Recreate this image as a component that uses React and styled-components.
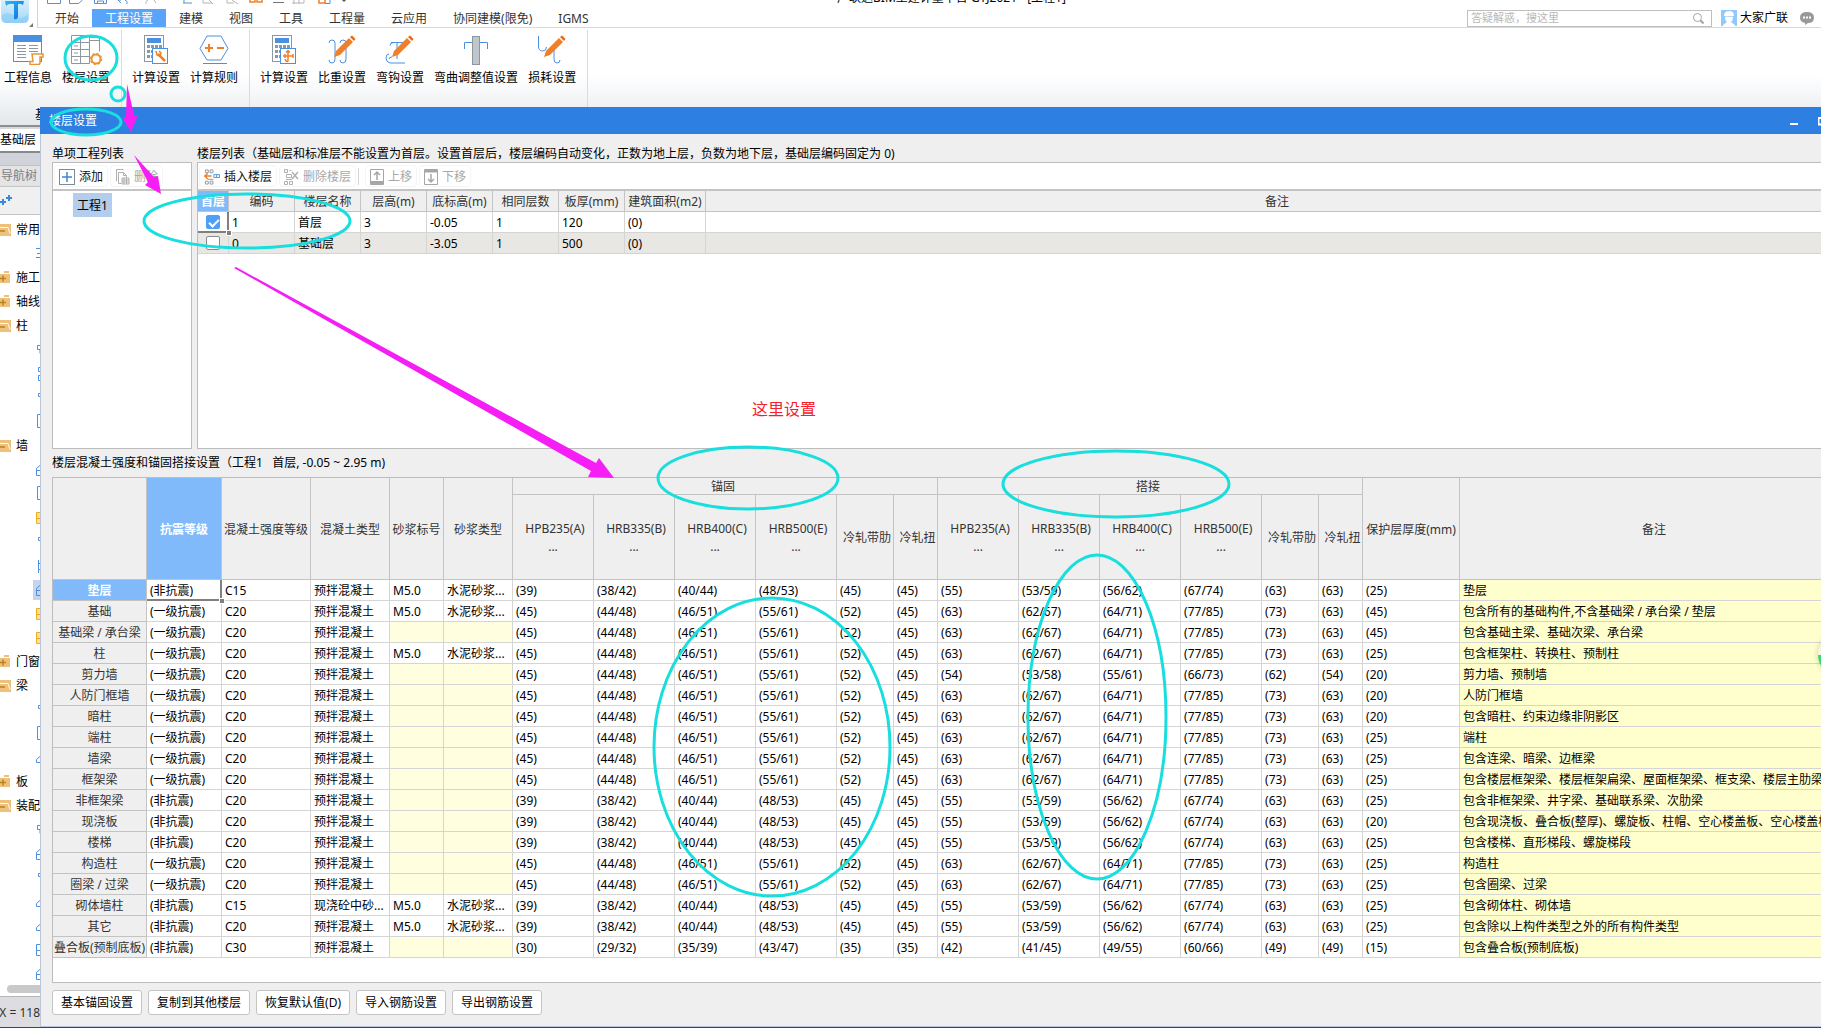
import { useState } from "react";
import styled, { createGlobalStyle } from "styled-components";

const GlobalStyle = createGlobalStyle`
  * {
    box-sizing: border-box;
  }
  body {
    margin: 0;
    overflow: hidden;
    background: #fff;
    font-family: "Noto Sans", "Noto Sans CJK SC", sans-serif;
    font-size: 12px;
    line-height: 16px;
    color: #000;
  }
  button, input {
    font: inherit;
    color: inherit;
    margin: 0;
  }
  svg {
    display: block;
    flex: none;
  }
`;

const Page = styled.div`
  position: relative;
  display: flex;
  flex-direction: column;
  height: 100vh;
  overflow: hidden;
  border-bottom: 1px solid #3b4450;
`;

/* ---------- header ---------- */

const Header = styled.header`
  display: flex;
  height: 28px;
  flex: none;
`;

const LogoBox = styled.div`
  width: 38px;
  border-right: 1px solid #d5d5d5;
`;

const HeaderMain = styled.div`
  flex: 1;
  display: flex;
  flex-direction: column;
  border-bottom: 1px solid #d9d9d9;
`;

const TitleRow = styled.div`
  display: flex;
  align-items: flex-end;
  height: 9px;
  padding: 0 264px 3px 8px;
  overflow: hidden;
`;

const QuickBar = styled.div`
  height: 6px;
`;

const AppTitle = styled.div`
  flex: 1;
  text-align: center;
`;

const TabRow = styled.div`
  display: flex;
  align-items: center;
  height: 18px;
  padding: 0 7px 0 4px;
`;

const Tab = styled.button`
  height: 18px;
  padding: 2px 13px 0;
  border: 0;
  white-space: nowrap;
  background: ${(p) => (p.$active ? "#58a4f8" : "transparent")};
  color: ${(p) => (p.$active ? "#fff" : "#333")};
`;

const SearchBox = styled.label`
  display: flex;
  align-items: center;
  width: 245px;
  height: 17px;
  margin-left: auto;
  padding: 0 7px 0 3px;
  border: 1px solid #c0c0c0;
`;

const SearchInput = styled.input`
  flex: 1;
  min-width: 0;
  height: 15px;
  padding: 0;
  border: 0;
  outline: 0;
  background: transparent;
  font-size: 11px;
  &::placeholder {
    color: #b8b8b8;
  }
`;

const User = styled.div`
  display: flex;
  align-items: center;
  gap: 3px;
  margin: 0 12px 0 9px;
`;

/* ---------- ribbon ---------- */

const Ribbon = styled.div`
  display: flex;
  flex: none;
  height: 79px;
  padding-top: 2px;
  background: linear-gradient(#fff 60%, #eef1f3);
`;

const RibbonGroup = styled.div`
  display: flex;
  gap: 10px;
  padding: 5px 11px 0 ${(p) => (p.$first ? "4px" : "10px")};
  border-right: 1px solid #d9dbdc;
`;

const RibbonButton = styled.button`
  display: flex;
  flex-direction: column;
  align-items: center;
  gap: 5px;
  height: 51px;
  padding: 0;
  border: 0;
  background: none;
  white-space: nowrap;
`;

/* ---------- left strip ---------- */

const Workspace = styled.div`
  display: flex;
  flex: 1;
  min-height: 0;
`;

const Sidebar = styled.aside`
  display: flex;
  flex-direction: column;
  width: 40px;
  flex: none;
  overflow: hidden;
  white-space: nowrap;
`;

const RibbonFoot = styled.div`
  height: 18px;
  padding-left: 35px;
  background: linear-gradient(#eef1f3, #e3e7e9);
`;

const FloorPicker = styled.div`
  height: 28px;
  padding-top: 5px;
  border-top: 2px solid #8e8e8e;
  border-bottom: 2px solid #858a8e;
  background: linear-gradient(#d9d9d9 2px, #fff 2px);
`;

const NavGap = styled.div`
  height: 12px;
  background: #d0d3d9;
`;

const NavTitle = styled.div`
  height: 22px;
  padding: 2px 0 0 1px;
  border-top: 1px solid #bfc2c6;
  border-bottom: 1px solid #c4c4c4;
  background: #e4e4e6;
  color: #7d7d7d;
`;

const NavTools = styled.div`
  height: 28px;
  padding-top: 7px;
  border-bottom: 1px solid #c4c4c4;
  background: #f0f0f0;
`;

const Tree = styled.div`
  flex: 1;
  min-height: 0;
  padding-top: 3px;
  overflow: hidden;
`;

const TreeRow = styled.div`
  display: flex;
  align-items: center;
  gap: 4px;
  height: 24px;
`;

const TreeLeaf = styled.div`
  width: 7px;
  height: 20px;
  margin-left: 33px;
  padding: 2px 0 0 3px;
  background: ${(p) => (p.$selected ? "#c3d5ee" : "transparent")};
`;

const ScrollThumb = styled.div`
  height: 8px;
  flex: none;
  margin: 0 -8px 3px 7px;
  border-radius: 4px;
  background: #c9c9c9;
`;

const StatusBar = styled.div`
  display: flex;
  justify-content: flex-end;
  align-items: center;
  height: 31px;
  flex: none;
  padding-top: 2px;
  border-top: 1px solid #b5b5ba;
  background: #dddde1;
  color: #333;
`;

/* ---------- dialog ---------- */

const Dialog = styled.section`
  display: flex;
  flex-direction: column;
  flex: 1;
  min-width: 0;
  margin-right: -41px;
  background: #efefef;
`;

const DialogTitle = styled.div`
  display: flex;
  align-items: center;
  height: 27px;
  flex: none;
  padding: 0 33px 0 9px;
  background: #2d7fe1;
  color: #fff;
`;

const WindowButtons = styled.div`
  display: flex;
  gap: 20px;
  margin-left: auto;
`;

const WindowButton = styled.button`
  padding: 0;
  border: 0;
  background: none;
`;

const DialogBody = styled.div`
  display: flex;
  flex-direction: column;
  flex: 1;
  min-height: 0;
  padding: 10px 12px 11px 11px;
  border-left: 1px solid #bcc6da;
  border-bottom: 1px solid #bcc6da;
`;

const Lists = styled.div`
  display: flex;
  gap: 5px;
`;

const ListColumn = styled.div`
  min-width: 0;
  ${(p) => (p.$wide ? "flex: 1;" : "flex: 0 0 140px;")}
`;

const Caption = styled.div`
  display: flex;
  align-items: center;
  height: ${(p) => (p.$tall ? "28px" : "18px")};
  padding-top: ${(p) => (p.$tall ? "0" : "2px")};
  flex: none;
  white-space: pre;
`;

const Panel = styled.div`
  border: 1px solid #bdbdbd;
  background: #fff;
  overflow: hidden;
  ${(p) => (p.$fill ? "flex: 1; min-height: 0;" : "height: 287px;")}
`;

const Toolbar = styled.div`
  display: flex;
  align-items: center;
  gap: 2px;
  height: 28px;
  padding: 0 1px;
  border-bottom: 2px solid #c4c4c4;
`;

const ToolButton = styled.button`
  display: flex;
  align-items: center;
  gap: 4px;
  height: 22px;
  padding: 1px 4px 0;
  border: 1px solid #f5f5f5;
  border-radius: 4px;
  background: #fff;
  white-space: nowrap;
  color: ${(p) => (p.disabled ? "#a8a8a8" : "#111")};
`;

const ToolDivider = styled.div`
  width: 1px;
  height: 17px;
  margin: 0 4px 0 0;
  background: #d8d8d8;
`;

const ProjectItem = styled.button`
  display: block;
  height: 24px;
  margin: 2px 0 0 20px;
  padding: 2px 4px 0;
  border: 0;
  background: #b3cdec;
`;

const Table = styled.table`
  width: 100%;
  table-layout: fixed;
  border-collapse: separate;
  border-spacing: 0;
`;

const HeadCell = styled.th`
  height: ${(p) => p.$height || 21}px;
  padding: 2px ${(p) => (p.$group ? "4px" : "0")} 0 ${(p) => (p.$sub ? "4px" : "0")};
  border-right: 1px solid #c3c3c3;
  border-bottom: 1px solid #c3c3c3;
  background: ${(p) => (p.$selected ? "#80bafb" : "#efefef")};
  color: ${(p) => (p.$selected ? "#fff" : "#333")};
  font-weight: ${(p) => (p.$selected ? 700 : 400)};
  line-height: ${(p) => (p.$group ? "14px" : "16px")};
  text-align: center;
  white-space: nowrap;
`;

const Dots = styled.div`
  margin: 2px 0 0 -4px;
`;

const cellColors = {
  plain: "#fff",
  shaded: "#e8e7e3",
  empty: "#ffffe0",
  note: "#ffffcd",
};

const Cell = styled.td`
  position: relative;
  height: 21px;
  padding: 2px 0 0 3px;
  border-right: 1px solid #d5d5d5;
  border-bottom: 1px solid #d5d5d5;
  background: ${(p) => cellColors[p.$tone || "plain"]};
  white-space: nowrap;
  ${(p) => p.$current && "box-shadow: inset -1px -1px 0 #808080; border-color: #808080;"}
`;

const CheckCell = styled(Cell)`
  padding: 0 0 0 8px;
`;

const FillHandle = styled.span`
  position: absolute;
  z-index: 1;
  right: -4px;
  bottom: -4px;
  width: 6px;
  height: 6px;
  border: 1px solid #fff;
  background: #808080;
`;

const CheckBox = styled.input`
  appearance: none;
  display: block;
  width: 14px;
  height: 14px;
  border: 1px solid #8a8a8a;
  border-radius: 2px;
  background: #fff;
  &:checked {
    border-color: #4f9ff6;
    background: #4f9ff6;
  }
  &:checked::after {
    content: "";
    display: block;
    width: 8px;
    height: 4px;
    margin: 3px 0 0 2px;
    border-left: 2px solid #fff;
    border-bottom: 2px solid #fff;
    transform: rotate(-45deg);
  }
`;

const Footer = styled.div`
  display: flex;
  gap: 6px;
  flex: none;
  padding-top: 7px;
`;

const FooterButton = styled.button`
  height: 25px;
  padding: 0 8px;
  border: 1px solid #c4c4c4;
  border-radius: 3px;
  background: #fff;
  white-space: nowrap;
`;

/* ---------- marks drawn over the page ---------- */

const Marks = styled.svg`
  position: absolute;
  inset: 0;
  z-index: 2;
  width: 100%;
  height: 100%;
  pointer-events: none;
`;

const MarkText = styled.div`
  position: absolute;
  z-index: 2;
  left: 752px;
  top: 398px;
  font-size: 16px;
  line-height: 22px;
  color: #f5222d;
`;

const FloatBall = styled.div`
  position: absolute;
  z-index: 2;
  right: -37px;
  top: 635px;
  width: 40px;
  height: 40px;
  border-radius: 50%;
  background: linear-gradient(#f3f7e6 50%, #35d86a 50%);
  box-shadow: 0 0 6px rgba(0, 0, 0, 0.2);
`;

/* ---------- icons ---------- */

const BLUE = "#4a90e2";
const GRAY = "#8d979e";
const ORANGE = "#f07f2a";

const Logo = () => (
  <svg width="37" height="28" viewBox="0 0 37 28">
    <defs>
      <linearGradient id="sky" x1="0" y1="0" x2="0" y2="1">
        <stop offset="0" stopColor="#e6f5fe" />
        <stop offset="1" stopColor="#a3d8f8" />
      </linearGradient>
      <linearGradient id="tee" x1="0" y1="0" x2="1" y2="1">
        <stop offset="0" stopColor="#2cb4f5" />
        <stop offset="1" stopColor="#0d6fd8" />
      </linearGradient>
    </defs>
    <rect x="1" y="-6" width="28" height="29" rx="5" fill="url(#sky)" />
    <path d="M2 15q7-4 13 1t13-2v5q0 4-4 4H6q-4 0-4-4z" fill="#7fc6f5" opacity=".5" />
    <path d="M5 1h19l-1 4q-3-2-5-1v13q-1 3-4 2V4Q8 3 6 6z" fill="url(#tee)" />
    <path d="M33 23v4h-4z" fill="#777" />
  </svg>
);

// only the lower edge of the quick access icons is inside the window
const QuickIcons = () => (
  <svg width="300" height="6" viewBox="0 0 300 6" fill="none">
    <g stroke="#5b8fd0">
      <path d="M1.500 0v3.500h13V0M23.500 0v3.500h9l4-3.500M48.500 0v3.500h12V0M51.500 3v-2h6v2" />
      <path d="M75 0l-3 0 3 3M79 0q3 1 2 4M137 3h9M138 0v3" />
    </g>
    <g stroke="#b5b5b5">
      <path d="M108 0l2 3M102 0q-3 1-2 4M157 0v3h9M163 0l4 4M181 0v3h7M186 0l6 4M248 0v4M253 0v4M258 0v3h-12" />
    </g>
    <g stroke={ORANGE} strokeWidth="1.500">
      <path d="M204 0v2h5V0M211 0v2h5V0M273 0v3h6V0" />
    </g>
    <path d="M227 2.500h11" stroke="#777" />
    <path d="M279 3.500h5V0" stroke={BLUE} />
    <path d="M296 0h4l-2 2z" fill="#555" />
  </svg>
);

const Calc = ({ children }) => (
  <svg width="32" height="30" viewBox="0 0 32 30">
    <rect x="4.500" y=".5" width="19" height="26" fill="#fff" stroke={GRAY} />
    <rect x="7" y="3" width="14" height="5" fill={BLUE} />
    <g fill={GRAY}>
      {[10, 15, 20].map((y) =>
        [7, 11, 15, 19].map((x) => <rect key={x + "-" + y} x={x} y={y} width="3" height="3" />)
      )}
    </g>
    <rect x="12.500" y="13.500" width="15" height="15" fill="#fff" stroke={BLUE} />
    {children}
  </svg>
);

const Pencil = () => (
  <g>
    <path d="M8 22l2-6 13-13 4 4-13 13z" fill={ORANGE} />
    <path d="M24 2l2-1.500 3.500 3.500-1.500 2z" fill="#e56a17" />
  </g>
);

const ribbonIcons = {
  info: (
    <svg width="32" height="30" viewBox="0 0 32 30">
      <rect x="1.500" y=".5" width="28" height="26" fill="#fff" stroke={BLUE} />
      <rect x="1" y="0" width="29" height="7" fill={BLUE} />
      <path d="M5 10.500h9M17 10.500h9M5 13.500h9M17 13.500h9M5 16.500h9M17 16.500h9M5 19.500h9M5 22.500h9" stroke={GRAY} />
      <path d="M20 19h11v3h-3v6q0 1.500-2 1.500h-8v-3h3z" fill="#fff" stroke="#e8963a" strokeWidth="1.500" />
    </svg>
  ),
  floor: (
    <svg width="32" height="30" viewBox="0 0 32 30" fill="none" stroke={GRAY}>
      <path d="M1.500.5h18v28h-18zM1.500 7.500h18M1.500 14.500h18M1.500 21.500h18M10.500.5v28M19.500 2.500h10v14M19.500 5.500h10" />
      <path d="M4 11h4M4 18h4M4 25h4" />
      <circle cx="26" cy="24" r="4.500" fill="#fff" stroke="#e8963a" strokeWidth="2" />
      <circle cx="26" cy="24" r="5.500" stroke="#e8963a" strokeWidth="1.500" strokeDasharray="2 2.300" />
    </svg>
  ),
  calcWrench: (
    <Calc>
      <path d="M18 19l7 7" stroke={ORANGE} strokeWidth="2.500" />
      <path d="M16 16l1 4 3 1 1-3-2-2" fill="none" stroke={ORANGE} strokeWidth="1.500" />
    </Calc>
  ),
  calcRule: (
    <svg width="32" height="30" viewBox="0 0 32 30" fill="none">
      <path d="M9 1h14l7 12.500L23 25H9L2 13.500z" stroke={BLUE} />
      <path d="M7 13h8M11 9v8M19 13h7" stroke={ORANGE} strokeWidth="2" />
      <path d="M5 28.500h24" stroke={BLUE} />
    </svg>
  ),
  calcArrows: (
    <Calc>
      <path d="M20 15.500v11M15 21h10M18 17.500l2-2 2 2M17 24q1 3 3 2.500M25 19v4M17 19v4" fill="none" stroke={ORANGE} strokeWidth="1.500" />
    </Calc>
  ),
  weight: (
    <svg width="32" height="30" viewBox="0 0 32 30" fill="none">
      <path d="M3 8q0-3 3-3t3 3v16q0 4-3 4t-3-3M14 8q0-3 3-3t3 3v16q0 4-3 4t-3-3" stroke={BLUE} />
      <Pencil />
    </svg>
  ),
  hook: (
    <svg width="32" height="30" viewBox="0 0 32 30" fill="none">
      <path d="M7 7.500h13M10 7.500q-4 0-4 3M5 19q-3 0-3 4t4 5h15M13 8v16M8 22q-3 0-3 2" stroke={BLUE} />
      <Pencil />
    </svg>
  ),
  bend: (
    <svg width="32" height="30" viewBox="0 0 32 30" fill="none">
      <path d="M4.500 14V7.500h23V14" stroke={BLUE} />
      <rect x="12.500" y="1.500" width="7" height="28" fill="#bfc6cc" stroke={GRAY} />
    </svg>
  ),
  loss: (
    <svg width="32" height="30" viewBox="0 0 32 30" fill="none">
      <path d="M2.500 1v10q0 5 4 5t4-4M18 10v14q0 4 3 4t3-3" stroke={BLUE} />
      <Pencil />
    </svg>
  ),
};

const FolderIcon = ({ open }) => (
  <svg width="12" height="14" viewBox="0 0 12 14">
    <path d={open ? "M0 1h11v12H0z" : "M0 3h10v9H0zM4 0h5v2H4z"} fill="#eec07a" />
    {open && <path d="M0 4.500h8l2 6" stroke="#fff" fill="none" />}
    <path d={open ? "M0 8h5" : "M0 7.500h6M3 4.500v6"} stroke="#b98227" fill="none" strokeWidth="1.500" />
  </svg>
);

const leafPaths = {
  lines: "M0 2.500h5M1 7.500h4M0 11.500h5",
  hook: "M5 3.500H1.500v4H5M4 7.500v4",
  blocks: "M5 1.500H2.500v4H5M5 9.500H2.500v5H5",
  dash: "M5 3.500H2.500v3H5",
  frame: "M5 .5H1.500v13H5",
  wall: "M5 2.500L.5 6.500v7H5M1 8.500h4",
  grid: "M5 2.500H.5v11H5M1 8.500h4",
  pole: "M2.500 2v13M3 5.500h2M3 11.500h2",
  slab: "M5 5.500L.5 9.500v3H5",
};

const TreeIcon = ({ kind, color }) => (
  <svg width="5" height="16" viewBox="0 0 5 16">
    <path d={leafPaths[kind]} stroke={color || BLUE} fill={color ? "#ffe28a" : "none"} />
  </svg>
);

const toolIcons = {
  add: (
    <svg width="16" height="16" viewBox="0 0 16 16" fill="none">
      <rect x=".5" y=".5" width="15" height="15" stroke="#7d8b94" />
      <path d="M3 8h10M8 3v10" stroke="#3c86dc" strokeWidth="1.500" />
    </svg>
  ),
  remove: (
    <svg width="15" height="16" viewBox="1 0 15 16" fill="none" stroke="#b0b0b0">
      <path d="M2.500 12V.5h7M4.500 14.500v-11h5l3 3v2M4.500 14.500h3M9.500 3.500v3h3" />
      <path d="M8 9h7v6H8zM8 11h7M8 13h7M10 9v6M12.500 9v6" />
    </svg>
  ),
  insert: (
    <svg width="16" height="16" viewBox="0 0 17 16" fill="none" stroke={GRAY}>
      <path d="M1.500.5h3v3h-3zM6.500.5h3v3h-3zM1.500 12.500h3v3h-3zM6.500 12.500h3v3h-3zM4 10.500h6" />
      <path d="M10.500 5.500h6v3h-6zM13.500 5.500v3" stroke={BLUE} />
      <path d="M0 7h8M4 4L1 7l3 3" stroke={ORANGE} strokeWidth="1.500" />
    </svg>
  ),
  drop: (
    <svg width="15" height="16" viewBox="1 0 15 16" fill="none" stroke="#b0b0b0">
      <path d="M1.500.5h3v3h-3zM6.500 1.500h2M3.500 5.500h5v3h-5zM1.500 12.500h3v3h-3zM6.500 12.500h3v3h-3zM3 10.500h6" />
      <path d="M9 3l6 7M15 3l-6 7" strokeWidth="1.500" />
    </svg>
  ),
  up: (
    <svg width="14" height="16" viewBox="0 0 14 16" fill="none" stroke="#a6a6a6">
      <path d="M.5.500h13v15H.5z" />
      <path d="M1 13.500h12" strokeWidth="3" />
      <path d="M7 11V3M4 6l3-3 3 3" strokeWidth="1.500" />
    </svg>
  ),
  down: (
    <svg width="14" height="16" viewBox="0 0 14 16" fill="none" stroke="#a6a6a6">
      <path d="M.5.500h13v15H.5z" />
      <path d="M1 2h12" strokeWidth="3" />
      <path d="M7 5v8M4 10l3 3 3-3" strokeWidth="1.500" />
    </svg>
  ),
};

/* ---------- data ---------- */

const tabs = ["开始", "工程设置", "建模", "视图", "工具", "工程量", "云应用", "协同建模(限免)", "IGMS"];

const ribbonGroups = [
  [["info", "工程信息"], ["floor", "楼层设置"]],
  [["calcWrench", "计算设置"], ["calcRule", "计算规则"]],
  [
    ["calcArrows", "计算设置"],
    ["weight", "比重设置"],
    ["hook", "弯钩设置"],
    ["bend", "弯曲调整值设置"],
    ["loss", "损耗设置"],
  ],
];

const YELLOW = "#f2a91c";

const tree = [
  { label: "常用", open: true },
  { kind: "lines" },
  { label: "施工" },
  { label: "轴线" },
  { label: "柱", open: true },
  { kind: "hook" },
  { kind: "blocks" },
  { kind: "dash" },
  { kind: "frame" },
  { label: "墙", open: true },
  { kind: "wall" },
  { kind: "frame" },
  { kind: "grid", color: YELLOW },
  { kind: "dash" },
  { kind: "pole" },
  { kind: "wall", selected: true },
  { kind: "grid", color: YELLOW },
  { kind: "grid", color: YELLOW },
  { label: "门窗" },
  { label: "梁", open: true },
  { kind: "dash" },
  { kind: "frame" },
  { kind: "slab" },
  { label: "板" },
  { label: "装配", open: true },
  { kind: "hook" },
  { kind: "wall" },
  { kind: "dash" },
  { kind: "slab" },
  { kind: "slab" },
  { kind: "grid" },
  { kind: "wall" },
];

const floorHeads = ["首层", "编码", "楼层名称", "层高(m)", "底标高(m)", "相同层数", "板厚(mm)", "建筑面积(m2)", "备注"];
const floorWidths = [31, 66, 66, 66, 66, 66, 66, 81];
const floors = [
  ["1", "首层", "3", "-0.05", "1", "120", "(0)", ""],
  ["0", "基础层", "3", "-3.05", "1", "500", "(0)", ""],
];

const bars = ["HPB235(A)", "HRB335(B)", "HRB400(C)", "HRB500(E)", "冷轧带肋", "冷轧扭"];
const barWidths = [81, 81, 81, 81, 57, 44];
const gradeWidths = [94, 75, 89, 79, 54, 69, ...barWidths, ...barWidths, 97];

const plainBars = ["39", "38/42", "40/44", "48/53", "45", "45", "55", "53/59", "56/62", "67/74", "63", "63"];
const seismicAnchor = ["45", "44/48", "46/51", "55/61", "52", "45"];
const seismicBars = [...seismicAnchor, "63", "62/67", "64/71", "77/85", "73", "63"];
const shearBars = [...seismicAnchor, "54", "53/58", "55/61", "66/73", "62", "54"];
const slabBars = ["30", "29/32", "35/39", "43/47", "35", "35", "42", "41/45", "49/55", "60/66", "49", "49"];

const NONE = "(非抗震)";
const FIRST = "(一级抗震)";
const READY = "预拌混凝土";

// name, seismic grade, concrete grade, concrete type, has mortar, bars, cover, note
const grades = [
  ["垫层", NONE, "C15", READY, true, plainBars, 25, "垫层"],
  ["基础", FIRST, "C20", READY, true, seismicBars, 45, "包含所有的基础构件,不含基础梁 / 承台梁 / 垫层"],
  ["基础梁 / 承台梁", FIRST, "C20", READY, false, seismicBars, 45, "包含基础主梁、基础次梁、承台梁"],
  ["柱", FIRST, "C20", READY, true, seismicBars, 25, "包含框架柱、转换柱、预制柱"],
  ["剪力墙", FIRST, "C20", READY, false, shearBars, 20, "剪力墙、预制墙"],
  ["人防门框墙", FIRST, "C20", READY, false, seismicBars, 20, "人防门框墙"],
  ["暗柱", FIRST, "C20", READY, false, seismicBars, 20, "包含暗柱、约束边缘非阴影区"],
  ["端柱", FIRST, "C20", READY, false, seismicBars, 25, "端柱"],
  ["墙梁", FIRST, "C20", READY, false, seismicBars, 25, "包含连梁、暗梁、边框梁"],
  ["框架梁", FIRST, "C20", READY, false, seismicBars, 25, "包含楼层框架梁、楼层框架扁梁、屋面框架梁、框支梁、楼层主肋梁"],
  ["非框架梁", NONE, "C20", READY, false, plainBars, 25, "包含非框架梁、井字梁、基础联系梁、次肋梁"],
  ["现浇板", NONE, "C20", READY, false, plainBars, 20, "包含现浇板、叠合板(整厚)、螺旋板、柱帽、空心楼盖板、空心楼盖板"],
  ["楼梯", NONE, "C20", READY, false, plainBars, 25, "包含楼梯、直形梯段、螺旋梯段"],
  ["构造柱", FIRST, "C20", READY, false, seismicBars, 25, "构造柱"],
  ["圈梁 / 过梁", FIRST, "C20", READY, false, seismicBars, 25, "包含圈梁、过梁"],
  ["砌体墙柱", NONE, "C15", "现浇砼中砂...", true, plainBars, 25, "包含砌体柱、砌体墙"],
  ["其它", NONE, "C20", READY, true, plainBars, 25, "包含除以上构件类型之外的所有构件类型"],
  ["叠合板(预制底板)", NONE, "C30", READY, false, slabBars, 15, "包含叠合板(预制底板)"],
];

const footerButtons = ["基本锚固设置", "复制到其他楼层", "恢复默认值(D)", "导入钢筋设置", "导出钢筋设置"];

const ellipses = [
  [91, 58, 26, 22],
  [118, 94, 7, 7],
  [86, 122, 35, 13],
  [247, 221, 103, 27],
  [748, 478, 90, 31],
  [1116, 484, 113, 33],
  [772, 747, 118, 149],
  [1097, 717, 69, 162],
];

const arrows = [
  "127,84 134,115 138,115 131,132 122,117 126,117",
  "134,155 154,177 158,176 161,194 145,185 148,182",
  "234,268 236,267 596,463 599,458 614,478 588,477 591,471",
];

/* ---------- parts ---------- */

const AppHeader = () => (
  <Header>
    <LogoBox>
      <Logo />
    </LogoBox>
    <HeaderMain>
      <TitleRow>
        <QuickBar>
          <QuickIcons />
        </QuickBar>
        <AppTitle>广联达BIM土建计量平台 GTJ2021 - [工程1]</AppTitle>
      </TitleRow>
      <TabRow>
        {tabs.map((tab) => (
          <Tab key={tab} $active={tab === "工程设置"}>
            {tab}
          </Tab>
        ))}
        <SearchBox>
          <SearchInput type="text" placeholder="答疑解惑，搜这里" aria-label="答疑解惑，搜这里" />
          <svg width="11" height="11" viewBox="0 0 11 11" fill="none" stroke="#a3a3a3">
            <circle cx="4.500" cy="4.500" r="4" />
            <path d="M7.500 7.500l3 3" strokeWidth="2" />
          </svg>
        </SearchBox>
        <User>
          <svg width="16" height="16" viewBox="0 0 16 16">
            <rect width="16" height="16" fill="#92c8fb" />
            <path d="M3 6q0-5 5-5t5 5h-1q0 5-2 6l4 3v1H2v-1l4-3Q4 11 4 6z" fill="#fff" />
            <path d="M4 6.500h8" stroke="#b5dafc" />
          </svg>
          大家广联
        </User>
        <svg width="14" height="14" viewBox="0 0 14 14">
          <path d="M7 1q7 0 7 5.500T8 12l-3 2v-2Q0 11 0 6.500 0 1 7 1z" fill="#999" />
          <path d="M3 6.500h2M6 6.500h2M9 6.500h2" stroke="#fff" strokeWidth="2" />
        </svg>
      </TabRow>
    </HeaderMain>
  </Header>
);

const NavSidebar = () => (
  <Sidebar>
    <RibbonFoot>基</RibbonFoot>
    <FloorPicker>基础层</FloorPicker>
    <NavGap />
    <NavTitle>导航树</NavTitle>
    <NavTools>
      <svg width="14" height="12" viewBox="0 0 14 12">
        <path d="M0 8h6M3 5v6M6 4h6M9 1v6" stroke="#3c86dc" strokeWidth="2" />
      </svg>
    </NavTools>
    <Tree>
      {tree.map((row, i) => (
        <TreeRow key={i}>
          {row.label ? (
            <>
              <FolderIcon open={row.open} />
              {row.label}
            </>
          ) : (
            <TreeLeaf $selected={row.selected}>
              <TreeIcon kind={row.kind} color={row.color} />
            </TreeLeaf>
          )}
        </TreeRow>
      ))}
    </Tree>
    <ScrollThumb />
    <StatusBar>X = 118</StatusBar>
  </Sidebar>
);

const Columns = ({ widths }) => (
  <colgroup>
    {widths.map((w, i) => (
      <col key={i} style={{ width: w }} />
    ))}
    <col />
  </colgroup>
);

const FloorTable = () => {
  const [first, setFirst] = useState(0);

  return (
    <Table>
      <Columns widths={floorWidths} />
      <thead>
        <tr>
          {floorHeads.map((head, i) => (
            <HeadCell key={head} $selected={i === 0}>
              {head}
            </HeadCell>
          ))}
        </tr>
      </thead>
      <tbody>
        {floors.map((floor, i) => (
          <tr key={floor[0]}>
            <CheckCell $tone={i ? "shaded" : "plain"} $current={i === 0}>
              <CheckBox
                type="checkbox"
                aria-label={floor[1]}
                checked={first === i}
                onChange={() => setFirst(i)}
              />
              {i === 0 && <FillHandle />}
            </CheckCell>
            {floor.map((value, j) => (
              <Cell key={j} $tone={i ? "shaded" : "plain"}>
                {value}
              </Cell>
            ))}
          </tr>
        ))}
      </tbody>
    </Table>
  );
};

const BarHeads = () =>
  bars.map((bar, i) => (
    <HeadCell key={bar} $sub $height={85}>
      {bar}
      {i < 4 && <Dots>...</Dots>}
    </HeadCell>
  ));

const GradeTable = () => (
  <Table>
    <Columns widths={gradeWidths} />
    <thead>
      <tr>
        <HeadCell rowSpan={2} />
        <HeadCell rowSpan={2} $selected>抗震等级</HeadCell>
        <HeadCell rowSpan={2}>混凝土强度等级</HeadCell>
        <HeadCell rowSpan={2}>混凝土类型</HeadCell>
        <HeadCell rowSpan={2}>砂浆标号</HeadCell>
        <HeadCell rowSpan={2}>砂浆类型</HeadCell>
        <HeadCell colSpan={6} $group $height={17}>锚固</HeadCell>
        <HeadCell colSpan={6} $group $height={17}>搭接</HeadCell>
        <HeadCell rowSpan={2}>保护层厚度(mm)</HeadCell>
        <HeadCell rowSpan={2}>备注</HeadCell>
      </tr>
      <tr>
        <BarHeads />
        <BarHeads />
      </tr>
    </thead>
    <tbody>
      {grades.map(([name, seismic, grade, type, mortar, values, cover, note], i) => (
        <tr key={name}>
          <HeadCell scope="row" $selected={i === 0}>
            {name}
          </HeadCell>
          <Cell $current={i === 0}>
            {seismic}
            {i === 0 && <FillHandle />}
          </Cell>
          <Cell>{grade}</Cell>
          <Cell>{type}</Cell>
          <Cell $tone={mortar ? "plain" : "empty"}>{mortar && "M5.0"}</Cell>
          <Cell $tone={mortar ? "plain" : "empty"}>{mortar && "水泥砂浆..."}</Cell>
          {values.map((value, j) => (
            <Cell key={j}>({value})</Cell>
          ))}
          <Cell>({cover})</Cell>
          <Cell $tone="note">{note}</Cell>
        </tr>
      ))}
    </tbody>
  </Table>
);

const FloorDialog = () => (
  <Dialog>
    <DialogTitle>
      楼层设置
      <WindowButtons>
        <WindowButton aria-label="最小化">
          <svg width="8" height="10" viewBox="0 0 8 10">
            <path d="M0 8h8" stroke="#fff" strokeWidth="2" />
          </svg>
        </WindowButton>
        <WindowButton aria-label="最大化">
          <svg width="11" height="10" viewBox="0 0 11 10">
            <path d="M.5 2v6.500h9V2z" stroke="#fff" fill="none" strokeWidth="2" />
          </svg>
        </WindowButton>
      </WindowButtons>
    </DialogTitle>
    <DialogBody>
      <Lists>
        <ListColumn>
          <Caption>单项工程列表</Caption>
          <Panel>
            <Toolbar>
              <ToolButton>{toolIcons.add}添加</ToolButton>
              <ToolButton disabled>{toolIcons.remove}删除</ToolButton>
            </Toolbar>
            <ProjectItem>工程1</ProjectItem>
          </Panel>
        </ListColumn>
        <ListColumn $wide>
          <Caption>
            楼层列表（基础层和标准层不能设置为首层。设置首层后，楼层编码自动变化，正数为地上层，负数为地下层，基础层编码固定为 0)
          </Caption>
          <Panel>
            <Toolbar>
              <ToolButton>{toolIcons.insert}插入楼层</ToolButton>
              <ToolButton disabled>{toolIcons.drop}删除楼层</ToolButton>
              <ToolDivider />
              <ToolButton disabled>{toolIcons.up}上移</ToolButton>
              <ToolButton disabled>{toolIcons.down}下移</ToolButton>
            </Toolbar>
            <FloorTable />
          </Panel>
        </ListColumn>
      </Lists>
      <Caption $tall>{"楼层混凝土强度和锚固搭接设置（工程1   首层, -0.05 ~ 2.95 m)"}</Caption>
      <Panel $fill>
        <GradeTable />
      </Panel>
      <Footer>
        {footerButtons.map((label) => (
          <FooterButton key={label}>{label}</FooterButton>
        ))}
      </Footer>
    </DialogBody>
  </Dialog>
);

const App = () => (
  <>
    <GlobalStyle />
    <Page>
      <AppHeader />
      <Ribbon>
        {ribbonGroups.map((group, i) => (
          <RibbonGroup key={i} $first={i === 0}>
            {group.map(([icon, label]) => (
              <RibbonButton key={icon}>
                {ribbonIcons[icon]}
                {label}
              </RibbonButton>
            ))}
          </RibbonGroup>
        ))}
      </Ribbon>
      <Workspace>
        <NavSidebar />
        <FloorDialog />
      </Workspace>
      <FloatBall />
      <Marks>
        {ellipses.map(([cx, cy, rx, ry]) => (
          <ellipse key={cx} cx={cx} cy={cy} rx={rx} ry={ry} fill="none" stroke="#18dede" strokeWidth="3" />
        ))}
        {arrows.map((points) => (
          <polygon key={points} points={points} fill="#f51ff5" />
        ))}
      </Marks>
      <MarkText>这里设置</MarkText>
    </Page>
  </>
);

export default App;
